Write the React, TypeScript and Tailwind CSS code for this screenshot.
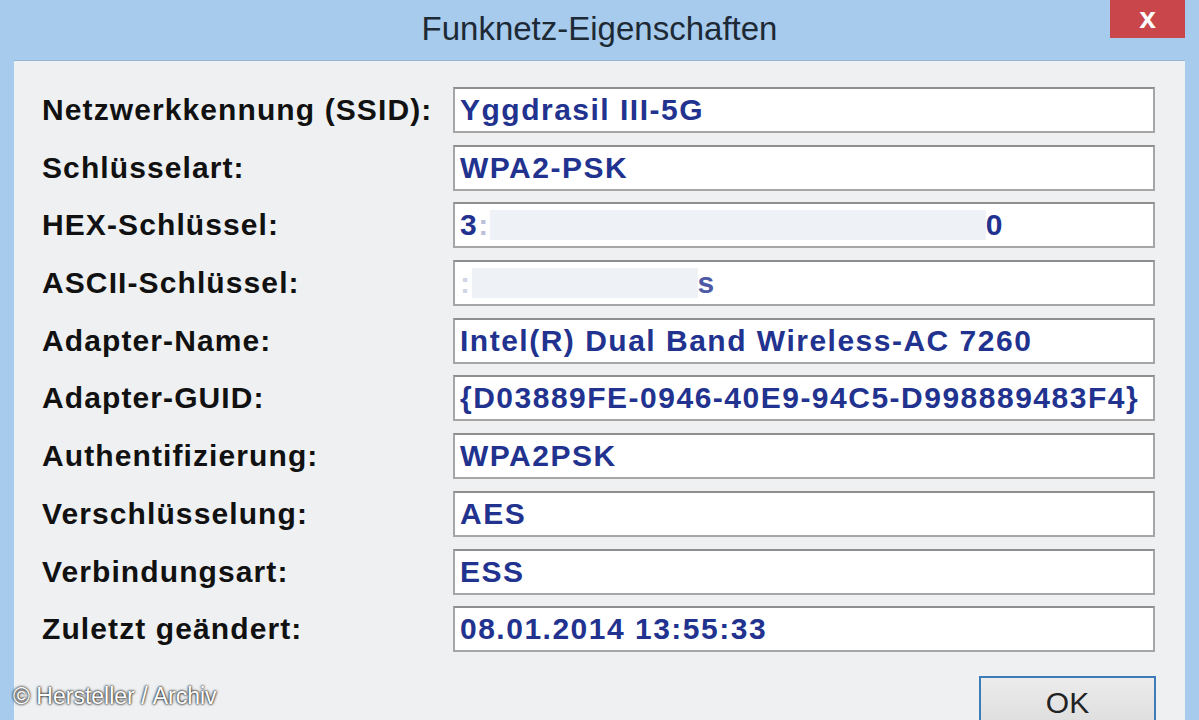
import type { ReactNode } from 'react';

// One label/value row of the properties dialog
type Row = { label: string; value: ReactNode };

const rows: Row[] = [
  { label: 'Netzwerkkennung (SSID):', value: 'Yggdrasil III-5G' },
  { label: 'Schlüsselart:', value: 'WPA2-PSK' },
  {
    label: 'HEX-Schlüssel:',
    value: (
      <span className="flex items-center">
        <span>3</span>
        <span className="opacity-30">:</span>
        {/* blurred-out key */}
        <span className="h-[30px] w-[496px] bg-[#eef1f5]" />
        <span>0</span>
      </span>
    ),
  },
  {
    label: 'ASCII-Schlüssel:',
    value: (
      <span className="flex items-center">
        <span className="opacity-20">:</span>
        <span className="h-[30px] w-[226px] bg-[#eef1f5]" />
        <span className="opacity-80">s</span>
      </span>
    ),
  },
  { label: 'Adapter-Name:', value: 'Intel(R) Dual Band Wireless-AC 7260' },
  { label: 'Adapter-GUID:', value: '{D03889FE-0946-40E9-94C5-D998889483F4}' },
  { label: 'Authentifizierung:', value: 'WPA2PSK' },
  { label: 'Verschlüsselung:', value: 'AES' },
  { label: 'Verbindungsart:', value: 'ESS' },
  { label: 'Zuletzt geändert:', value: '08.01.2014 13:55:33' },
];

export default function App() {
  return (
    <div className="relative h-[720px] w-[1199px] overflow-hidden bg-[#a7cbec] font-['Liberation_Sans',Arial,sans-serif]">
      {/* Title bar */}
      <div className="grid h-[60px] grid-cols-[1fr_auto_1fr]">
        <div />
        <div className="pt-[9px] text-[33px] leading-[40px] text-[#1d2935]">Funknetz-Eigenschaften</div>
        <div className="flex justify-end pr-[14px]">
          <div className="flex h-[38px] w-[75px] items-center justify-center bg-[#c9464b] pb-[4px] text-[30px] font-bold text-white">
            x
          </div>
        </div>
      </div>

      {/* Dialog body */}
      <div className="mx-[14px] h-[700px] border-t border-[#93b6d6] bg-[#eef0f2] pl-[28px] pt-[26px]">
        <div className="grid grid-cols-[411px_702px] gap-y-[11.7px]">
          {rows.map((row) => (
            <div key={row.label} className="contents">
              <div className="flex items-center text-[30px] font-bold leading-none tracking-[1.1px] text-[#111]">
                {row.label}
              </div>
              <div className="flex h-[46px] items-center overflow-hidden whitespace-nowrap border-2 border-[#a6a6a6] border-t-[#8e8e8e] bg-white pl-[5px] text-[30px] font-bold leading-none tracking-[1.5px] text-[#22328f]">
                {row.value}
              </div>
            </div>
          ))}
        </div>

        {/* Buttons */}
        <div className="mt-[24px] flex justify-end pr-[29px]">
          <div className="flex h-[56px] w-[177px] justify-center border-2 border-[#3c7cb8] bg-gradient-to-b from-[#ececec] to-[#dcdcdc] pt-[10px] text-[30px] leading-none text-[#222]">
            OK
          </div>
        </div>
      </div>

      {/* Photo credit watermark */}
      <div className="absolute left-[13px] top-[685px] text-[23px] leading-none text-white [text-shadow:0_0_3px_#000,0_0_2px_#333]">
        © Hersteller / Archiv
      </div>
    </div>
  );
}
